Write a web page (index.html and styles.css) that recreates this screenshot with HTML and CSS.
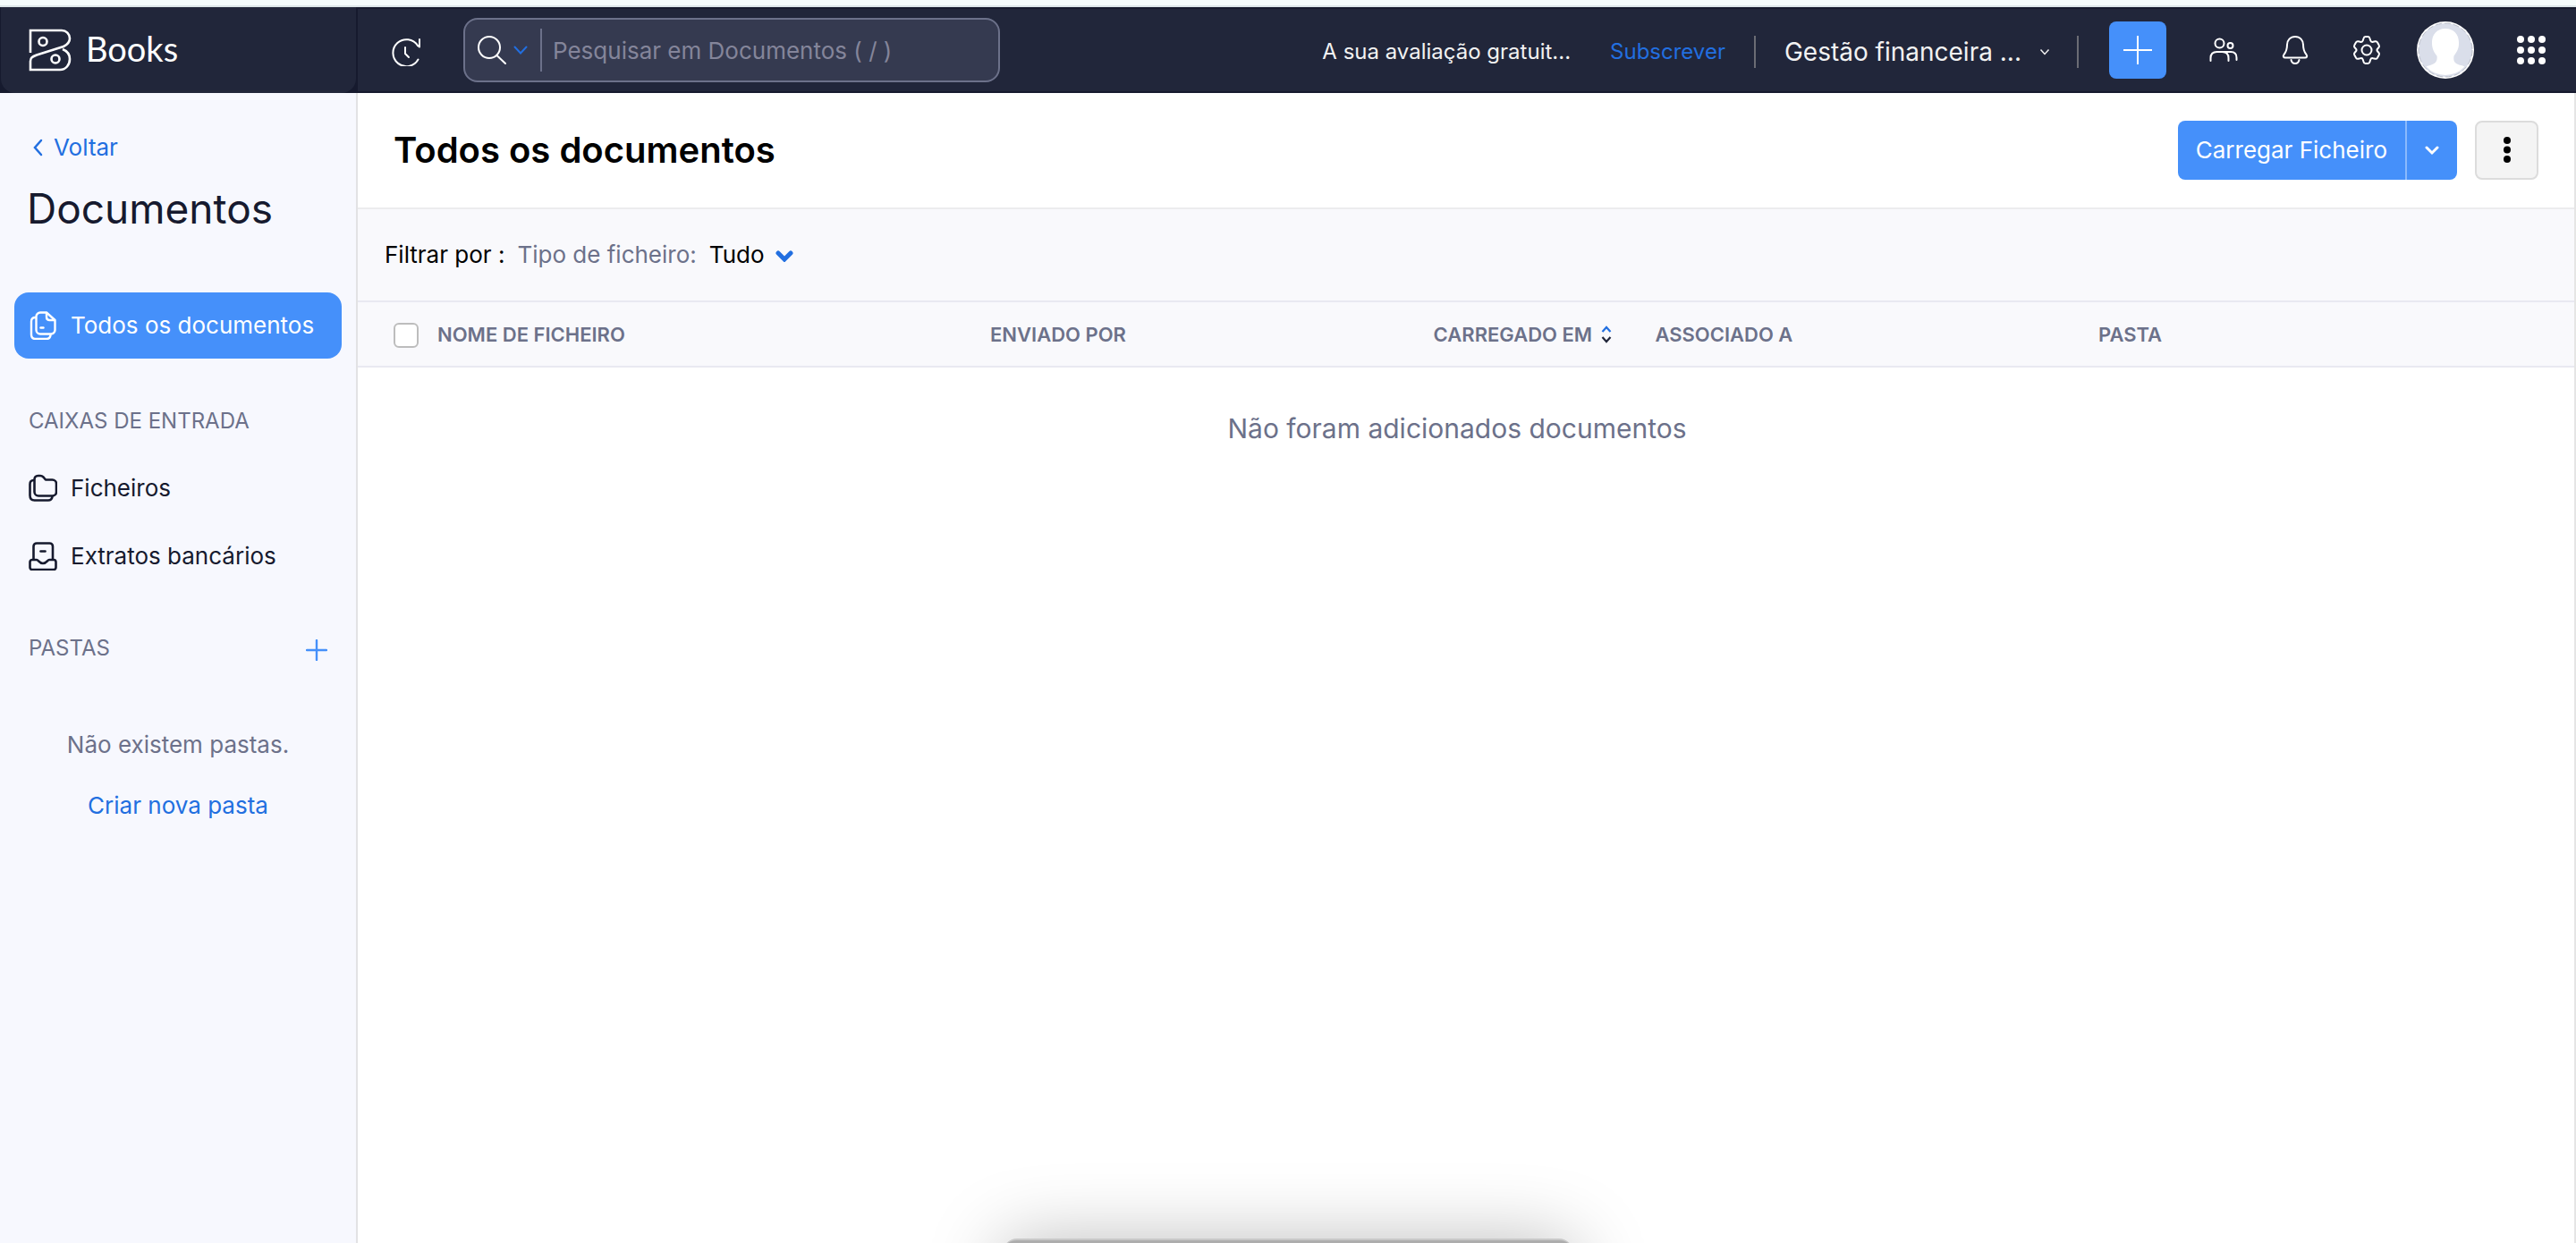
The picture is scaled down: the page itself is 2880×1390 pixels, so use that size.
FILE: index.html
```html
<!DOCTYPE html>
<html lang="pt">
<head>
<meta charset="utf-8">
<meta name="viewport" content="width=device-width, initial-scale=1">
<title>Todos os documentos | Books</title>
<link rel="stylesheet" href="styles.css">
</head>
<body>
<div class="app">
  <div class="window-edge"></div>
  <header class="topbar">
    <div class="brand-cell">
      <a class="brand" href="#">
        <svg class="brand-mark" viewBox="0 0 48 48" fill="none" stroke="currentColor" stroke-width="2.6">
          <path d="M2 27V2h35a9 9 0 0 1 9 9c0 5-3 7-7 9L9 29.500c-5 2-7 3-7 7V46h33c7 0 11-6 11-12 0-5-3-9-8-11"/>
          <circle cx="16" cy="14.500" r="4.500"/><circle cx="30" cy="34" r="4.500"/>
        </svg>
        <span class="brand-name">Books</span>
      </a>
    </div>
    <div class="toolbar">
      <button class="icon-btn history" type="button" aria-label="Recentes">
        <svg class="icon" viewBox="0 0 32 32" fill="none" stroke="currentColor" stroke-width="2" stroke-linecap="round" stroke-linejoin="round">
          <path d="M29.500 24.500A15 15 0 1 1 29 9"/><path d="M31 2v8.500l-2-1.500"/><path d="M15 11v7l4 4"/>
        </svg>
      </button>
      <form class="search" role="search">
        <button class="search-scope" type="button" aria-label="Âmbito da pesquisa">
          <svg class="icon" viewBox="0 0 32 32" fill="none" stroke="currentColor" stroke-width="2" stroke-linecap="round"><circle cx="13" cy="13" r="12"/><path d="M21.500 22L31 31"/></svg>
          <svg class="chevron accent" viewBox="0 0 16 16" fill="none" stroke="currentColor" stroke-width="2" stroke-linecap="round"><path d="M1.500 4.500L8 11.500l6.500-7"/></svg>
        </button>
        <input class="search-input" type="text" aria-label="Pesquisar" placeholder="Pesquisar em Documentos ( / )">
      </form>
      <div class="account">
        <span class="trial">A sua avaliação gratuit...</span>
        <a class="subscribe" href="#">Subscrever</a>
        <button class="org" type="button">
          <span>Gestão financeira ...</span>
          <svg class="chevron-sm" viewBox="0 0 12 12" fill="none" stroke="currentColor" stroke-width="1.500"><path d="M1.500 3.500L6 8.500l4.500-5"/></svg>
        </button>
      </div>
      <div class="actions">
        <button class="add" type="button" aria-label="Criar">
          <svg class="icon" viewBox="0 0 32 32" fill="none" stroke="currentColor" stroke-width="2"><path d="M16 0v32M0 16h32"/></svg>
        </button>
        <button class="icon-btn" type="button" aria-label="Utilizadores">
          <svg class="icon" viewBox="0 0 32 32" fill="none" stroke="currentColor" stroke-width="2" stroke-linecap="round">
            <circle cx="11.500" cy="8.500" r="5"/><circle cx="23.500" cy="11" r="3"/>
            <path d="M1.500 28v-3c0-5 3-7 7-7h6c5 0 7 2.500 7 7v3"/><path d="M16 18h8c4.500 0 6.500 3 6.500 6.500V27"/>
          </svg>
        </button>
        <button class="icon-btn" type="button" aria-label="Notificações">
          <svg class="icon" viewBox="0 0 32 32" fill="none" stroke="currentColor" stroke-width="2" stroke-linecap="round" stroke-linejoin="round">
            <path d="M16 1c-5.500 0-9 4-9 9 0 6-1 8-3.500 11-1.500 2-.500 3.500 1.500 3.500h22c2 0 3-1.500 1.500-3.500C26 18 25 16 25 10c0-5-3.500-9-9-9z"/><path d="M11.500 27c.500 2.500 2 4 4.500 4s4-1.500 4.500-4"/>
          </svg>
        </button>
        <button class="icon-btn" type="button" aria-label="Definições">
          <svg class="icon" viewBox="0 0 32 32" fill="none" stroke="currentColor" stroke-width="2" stroke-linejoin="round">
            <circle cx="16" cy="16" r="5.500"/>
            <path d="M12.500 3c.300-1.300 1-2 2-2h3c1 0 1.700.700 2 2l.700 2.200c.400 1.300 1.600 2 3 1.600l2.300-.500c1-.200 1.800 0 2.400 1l1.800 3.200c.600 1 .500 1.700-.200 2.500l-1.300 1.500c-1 1-1 2 0 3l1.300 1.500c.700.800.800 1.500.200 2.500l-1.800 3.200c-.600 1-1.400 1.200-2.400 1l-2.300-.500c-1.400-.400-2.600.300-3 1.600l-.700 2.200c-.300 1.300-1 2-2 2h-3c-1 0-1.700-.700-2-2l-.700-2.200c-.400-1.300-1.600-2-3-1.600l-2.300.500c-1 .200-1.800 0-2.400-1l-1.800-3.200c-.600-1-.500-1.700.200-2.500l1.300-1.500c1-1 1-2 0-3l-1.300-1.500c-.700-.800-.800-1.500-.200-2.500l1.800-3.200c.600-1 1.400-1.200 2.400-1l2.300.500c1.400.400 2.600-.300 3-1.600z"/>
          </svg>
        </button>
        <button class="avatar" type="button" aria-label="Perfil">
          <svg viewBox="0 0 64 64">
            <circle cx="32" cy="32" r="32" fill="#fff"/><circle cx="32" cy="32" r="30" fill="#dadeea" stroke="#b9bdc8" stroke-dasharray="7 3"/>
            <path d="M32 8c-10 0-15.500 7-15 17 .300 7 3.500 11 5.500 13.500.500 4 0 7-4 9-3 1.500-6 2-8 3A29 29 0 0 0 53.500 50.500c-3-1.500-5.500-1.500-8.500-3-4-2-4-5-3.500-9C44 35 47 31 47 25c.500-10-5-17-15-17z" fill="#fff"/>
          </svg>
        </button>
        <button class="icon-btn" type="button" aria-label="Aplicações">
          <svg class="icon" viewBox="0 0 32 32" fill="currentColor"><circle cx="4" cy="4" r="4"/><circle cx="16" cy="4" r="4"/><circle cx="28" cy="4" r="4"/><circle cx="4" cy="16" r="4"/><circle cx="16" cy="16" r="4"/><circle cx="28" cy="16" r="4"/><circle cx="4" cy="28" r="4"/><circle cx="16" cy="28" r="4"/><circle cx="28" cy="28" r="4"/></svg>
        </button>
      </div>
    </div>
  </header>

  <div class="body">
    <aside class="sidebar">
      <a class="back" href="#">
        <svg class="chevron" viewBox="0 0 16 20" fill="none" stroke="currentColor" stroke-width="2.500" stroke-linecap="round"><path d="M10 2L3 10l7 8"/></svg>
        <span>Voltar</span>
      </a>
      <h2 class="sidebar-title">Documentos</h2>
      <nav class="nav">
        <a class="nav-item active" href="#">
          <svg class="icon" viewBox="0 0 32 32" fill="none" stroke="currentColor" stroke-width="2.400" stroke-linecap="round" stroke-linejoin="round">
            <path d="M20 1.500h-7a4.500 4.500 0 0 0-4.500 4.500v15a4.500 4.500 0 0 0 4.500 4.500h12a4.500 4.500 0 0 0 4.500-4.500V10z"/><path d="M20 2v4.500c0 2 1 3.500 3.500 3.500h5.500"/><path d="M7.500 7C4.500 7 3 8.500 3 11.500v14.500c0 3 1.500 5 4.500 5H20c2.500 0 4-1.500 4.500-4"/><path d="M13.500 18.500h3"/>
          </svg>
          <span>Todos os documentos</span>
        </a>
        <h3 class="nav-label">CAIXAS DE ENTRADA</h3>
        <a class="nav-item" href="#">
          <svg class="icon" viewBox="0 0 32 32" fill="none" stroke="currentColor" stroke-width="2.600" stroke-linecap="round" stroke-linejoin="round">
            <path d="M6.500 6.500c0-3 1.500-4.500 4-4.500h2.500c1.500 0 2.500.500 3.500 1.500L19 6.500h7.500A4.500 4.500 0 0 1 31 11v9a4.500 4.500 0 0 1-4.500 4.500H11A4.500 4.500 0 0 1 6.500 20z"/><path d="M5.500 7C3 7 1.500 8.500 1.500 11.500V24c0 3.500 2 5.500 5 5.500H22c2.500 0 4-1.500 4.500-4"/>
          </svg>
          <span>Ficheiros</span>
        </a>
        <a class="nav-item" href="#">
          <svg class="icon" viewBox="0 0 32 32" fill="none" stroke="currentColor" stroke-width="2.600" stroke-linecap="round" stroke-linejoin="round">
            <path d="M5.500 19.500V5A3.500 3.500 0 0 1 9 1.500h14.500A3.500 3.500 0 0 1 27 5v14.500"/><path d="M4 20h5c2 0 2.500 4 7 4s5-4 7-4h5a2.500 2.500 0 0 1 2.500 2.500v6A2.500 2.500 0 0 1 28 31H4a2.500 2.500 0 0 1-2.500-2.500v-6A2.500 2.500 0 0 1 4 20z"/><path d="M13.500 10.500h5"/>
          </svg>
          <span>Extratos bancários</span>
        </a>
        <div class="nav-label-row">
          <h3 class="nav-label">PASTAS</h3>
          <button class="add-folder" type="button" aria-label="Nova pasta">
            <svg class="icon-sm" viewBox="0 0 24 24" fill="none" stroke="currentColor" stroke-width="2.400" stroke-linecap="round"><path d="M12 1v22M1 12h22"/></svg>
          </button>
        </div>
      </nav>
      <div class="no-folders">
        <p>Não existem pastas.</p>
        <a href="#">Criar nova pasta</a>
      </div>
    </aside>

    <main class="content">
      <div class="page-head">
        <h1 class="page-title">Todos os documentos</h1>
        <div class="page-actions">
          <div class="split">
            <button class="split-main" type="button">Carregar Ficheiro</button>
            <button class="split-more" type="button" aria-label="Mais opções de carregamento">
              <svg class="chevron" viewBox="0 0 16 16" fill="none" stroke="currentColor" stroke-width="3" stroke-linecap="round"><path d="M2 5l6 6 6-6"/></svg>
            </button>
          </div>
          <button class="more" type="button" aria-label="Mais">
            <svg class="dots" viewBox="0 0 8 30" fill="currentColor"><circle cx="4" cy="4" r="4"/><circle cx="4" cy="14.500" r="4"/><circle cx="4" cy="25" r="4"/></svg>
          </button>
        </div>
      </div>
      <div class="filters">
        <span>Filtrar por :</span>
        <span class="muted">Tipo de ficheiro:</span>
        <button class="filter" type="button">
          <span>Tudo</span>
          <svg class="chevron-lg accent" viewBox="0 0 20 16" fill="none" stroke="currentColor" stroke-width="5" stroke-linecap="round"><path d="M3 6l7 7 7-7"/></svg>
        </button>
      </div>
      <table class="docs">
        <colgroup><col class="c-check"><col><col class="c-wide"><col class="c-date"><col class="c-wide"><col class="c-folder"></colgroup>
        <thead>
          <tr>
            <th class="check"><input class="tick" type="checkbox" aria-label="Selecionar tudo"></th>
            <th>NOME DE FICHEIRO</th>
            <th>ENVIADO POR</th>
            <th><span class="sort">CARREGADO EM
              <svg class="sort-icon" viewBox="0 0 12 20" fill="none" stroke-width="2.200"><path d="M1.500 7L6 2l4.500 5" stroke="#226fe0"/><path d="M1.500 13L6 18l4.500-5" stroke="#21263a"/></svg></span></th>
            <th>ASSOCIADO A</th>
            <th>PASTA</th>
          </tr>
        </thead>
        <tbody>
          <tr><td class="empty" colspan="6">Não foram adicionados documentos</td></tr>
        </tbody>
      </table>
    </main>
  </div>
  <div class="dock"></div>
</div>
</body>
</html>
```
FILE: styles.css
```css
* { box-sizing: border-box; }

body {
  margin: 0;
  background: #fff;
  color: #000;
  font-family: Inter, "Liberation Sans", sans-serif;
  font-size: 26px;
  line-height: 32px;
}

h1, h2, h3, p { margin: 0; font-weight: 400; }
a { color: #226fe0; text-decoration: none; }
button {
  padding: 0;
  border: 0;
  background: none;
  color: inherit;
  font: inherit;
  cursor: pointer;
}
svg { display: block; flex: none; }

.app { display: flex; flex-direction: column; min-height: 100vh; }
.window-edge { height: 8px; background: #f4fbfb; border-bottom: 2px solid #dce6e8; }

.icon { width: 32px; height: 32px; }
.icon-sm { width: 24px; height: 24px; }
.chevron { width: 16px; height: 20px; }
.chevron-sm { width: 12px; height: 12px; }
.chevron-lg { width: 20px; height: 16px; }
.accent { color: #226fe0; }
.muted { color: #6c718a; }

/* Top bar */
.topbar { display: flex; height: 96px; background: #161a2e; color: #fff; }
.brand-cell { flex: none; width: 400px; padding: 0 2px 0 1px; }
.brand {
  display: flex;
  align-items: center;
  gap: 16px;
  height: 96px;
  padding-left: 31px;
  border-radius: 0 0 16px 16px;
  background: #21263a;
  color: #fff;
}
.brand-mark { width: 48px; height: 48px; }
.brand-name { padding-bottom: 4px; font-family: Lato, "Open Sans", sans-serif; font-size: 38px; line-height: 48px; }

.toolbar {
  display: flex;
  flex: 1;
  align-items: center;
  min-width: 0;
  padding: 0 34px 0 38px;
  border-top: 2px solid #161a2e;
  border-bottom: 2px solid #161a2e;
  background: #21263a;
}
.history { padding-top: 4px; }
.search {
  display: flex;
  align-items: center;
  width: 600px;
  height: 72px;
  margin-left: 48px;
  padding-left: 14px;
  border: 2px solid #6c718a;
  border-radius: 16px;
  background: #353a50;
}
.search-scope {
  display: flex;
  align-items: center;
  gap: 8px;
  height: 48px;
  padding-right: 14px;
  border-right: 2px solid #6c718a;
}
.search-input {
  flex: 1;
  min-width: 0;
  padding: 2px 12px 0;
  border: 0;
  outline: 0;
  background: none;
  color: #fff;
  font: inherit;
}
.search-input::placeholder { color: #84859a; opacity: 1; }

.account {
  display: flex;
  align-items: center;
  margin-left: auto;
  padding-top: 4px;
  font-size: 24px;
  line-height: 36px;
  white-space: nowrap;
}
.subscribe { margin-left: 44px; padding-right: 32px; border-right: 2px solid #6b6c74; }
.org {
  display: flex;
  align-items: center;
  gap: 20px;
  margin-left: 32px;
  padding-right: 30px;
  border-right: 2px solid #6b6c74;
  font-size: 28px;
}
.trial, .org { color: #f2f2f2; }
.actions { display: flex; align-items: center; gap: 48px; margin-left: 34px; }
.add {
  display: grid;
  place-items: center;
  width: 64px;
  height: 64px;
  border-radius: 8px;
  background: #4590fa;
}
.avatar { width: 64px; height: 64px; margin-left: -8px; }

/* Body */
.body { display: flex; flex: 1; }
.sidebar {
  flex: none;
  width: 400px;
  padding: 45px 16px;
  border-right: 2px solid #e2e2e4;
  background: #f7f8fe;
  color: #161a2e;
}
.back { display: flex; align-items: center; gap: 8px; padding-left: 20px; }
.sidebar-title { padding: 20px 14px 0; font-size: 46px; line-height: 64px; }
.nav { display: flex; flex-direction: column; gap: 2px; padding-top: 62px; }
.nav-item {
  display: flex;
  align-items: center;
  gap: 15px;
  height: 74px;
  padding-left: 16px;
  border-radius: 16px;
  color: #161a2e;
}
.active { background: #4590fa; color: #fff; }
.nav-label { padding: 52px 16px 20px; color: #6c718a; font-size: 24px; }
.nav-label-row { display: flex; align-items: center; justify-content: space-between; padding-right: 16px; }
.nav-label-row .nav-label { padding: 48px 16px 16px; }
.add-folder { padding-top: 36px; color: #4590fa; }
.no-folders {
  display: flex;
  flex-direction: column;
  align-items: center;
  gap: 36px;
  padding-top: 60px;
  color: #6c718a;
}

.content { flex: 1; min-width: 0; border-right: 2px solid #e5e5e5; }
.page-head {
  display: flex;
  align-items: center;
  justify-content: space-between;
  height: 130px;
  padding: 0 40px;
  border-bottom: 2px solid #ececee;
}
.page-title { font-size: 40px; line-height: 48px; font-weight: 600; }
.page-actions { display: flex; gap: 20px; }
.split { display: flex; overflow: hidden; height: 66px; border-radius: 8px; background: #4590fa; color: #fff; }
.split-main { padding: 0 20px; }
.split-more { display: grid; place-items: center; width: 58px; border-left: 2px solid #8ab9fc; }
.more {
  display: grid;
  place-items: center;
  width: 71px;
  height: 66px;
  border: 2px solid #dcdcdc;
  border-radius: 8px;
  background: #f4f4f4;
}
.dots { width: 8px; height: 30px; }

.filters {
  display: flex;
  align-items: center;
  gap: 14px;
  height: 104px;
  padding-left: 30px;
  border-bottom: 2px solid #e9e9f1;
  background: #f9f9fc;
}
.filter { display: flex; align-items: center; gap: 12px; }

.docs { width: 100%; border-collapse: separate; border-spacing: 0; table-layout: fixed; }
.c-check { width: 69px; }
.c-wide { width: 20%; }
.c-date { width: 10%; }
.c-folder { width: 552px; }
.docs th {
  height: 73px;
  padding: 0 0 0 20px;
  border-bottom: 2px solid #e9e9f1;
  background: #f9f9fc;
  color: #6c718a;
  font-size: 22px;
  font-weight: 600;
  text-align: left;
  white-space: nowrap;
}
.docs .check { padding: 2px 0 0 40px; }
.tick {
  display: block;
  appearance: none;
  width: 28px;
  height: 28px;
  margin: 0;
  border: 2px solid #bdbdbd;
  border-radius: 6px;
  background: #fff;
}
.sort { display: inline-flex; align-items: center; gap: 10px; }
.sort-icon { width: 12px; height: 20px; }
.docs .empty { padding: 52px 20px 52px 0; color: #6c718a; font-size: 30px; text-align: center; }

/* Panel rising from the bottom edge of the screen */
.dock {
  position: fixed;
  bottom: -95px;
  left: 50%;
  width: 638px;
  height: 100px;
  margin-left: -319px;
  border-top: 2px solid #c8c8c8;
  border-radius: 16px 16px 0 0;
  background: #adadad;
  box-shadow: 0 4px 84px rgba(0, 0, 0, 0.28);
}
```
